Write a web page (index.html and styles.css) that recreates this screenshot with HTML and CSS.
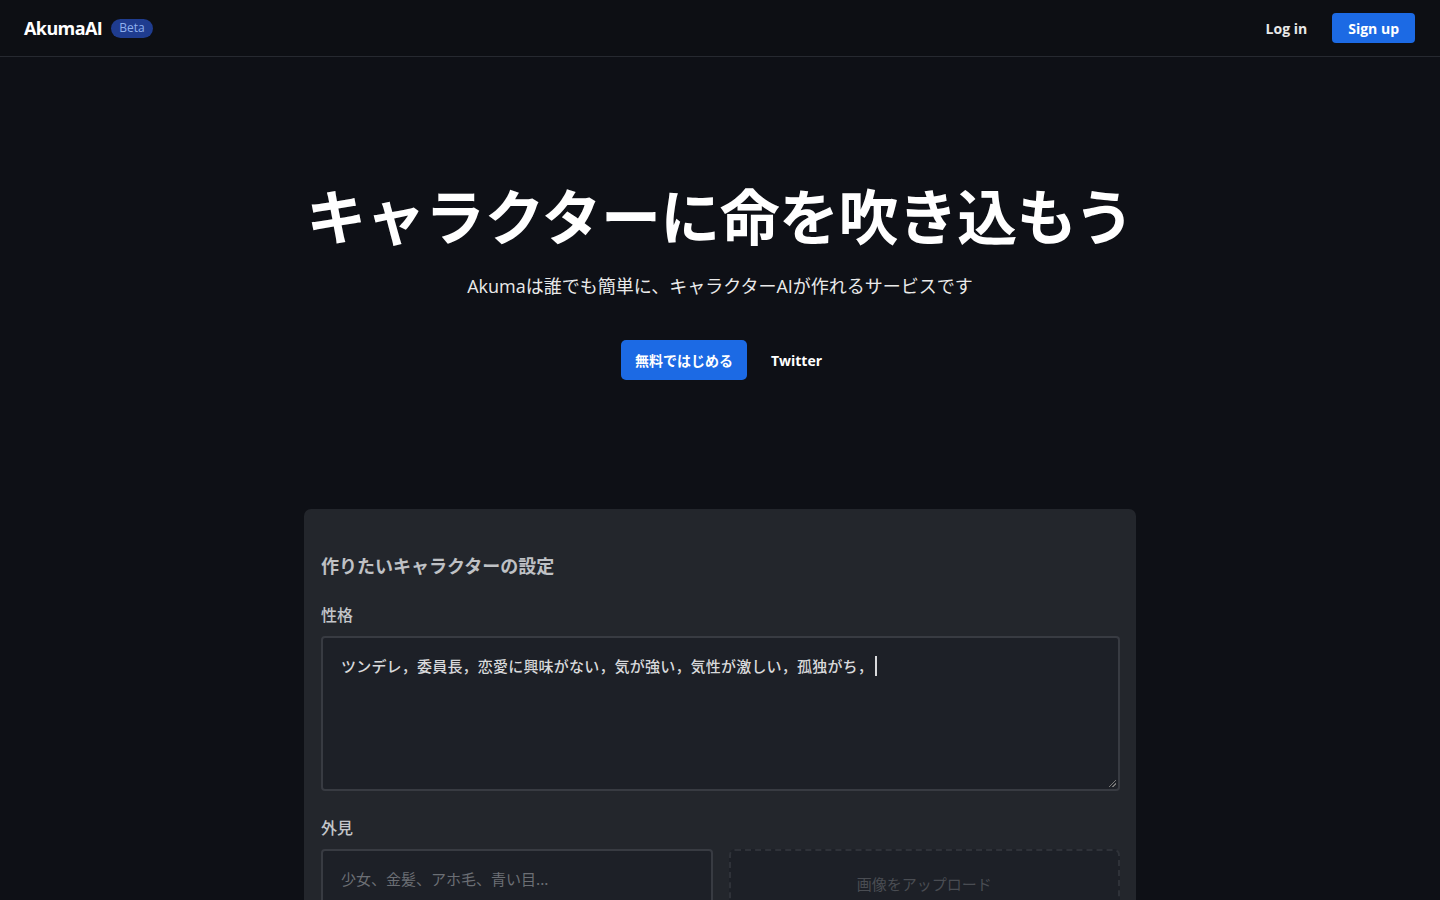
FILE: index.html
```html
<!DOCTYPE html>
<html lang="ja">
<head>
    <meta charset="UTF-8">
    <meta name="viewport" content="width=device-width, initial-scale=1.0">
    <title>AkumaAI</title>
    <link rel="stylesheet" href="styles.css">
</head>
<body>
    <header class="nav">
        <div class="brand">
            <span class="logo">AkumaAI</span>
            <span class="badge">Beta</span>
        </div>
        <div class="nav-actions">
            <a class="login" href="#">Log in</a>
            <a class="signup" href="#">Sign up</a>
        </div>
    </header>

    <section class="hero">
        <h1>キャラクターに命を吹き込もう</h1>
        <p class="lead">Akumaは誰でも簡単に、キャラクターAIが作れるサービスです</p>
        <div class="cta">
            <a class="btn-primary" href="#">無料ではじめる</a>
            <a class="btn-link" href="#">Twitter</a>
        </div>
    </section>

    <section class="card">
        <h2>作りたいキャラクターの設定</h2>
        <label class="field-label">性格</label>
        <div class="textarea">ツンデレ，委員長，恋愛に興味がない，気が強い，気性が激しい，孤独がち，<span class="caret"></span>
            <span class="grip"></span>
        </div>
        <label class="field-label">外見</label>
        <div class="row">
            <div class="input">少女、金髪、アホ毛、青い目...</div>
            <div class="dropzone"><span>画像をアップロード</span></div>
        </div>
    </section>
</body>
</html>
```

FILE: styles.css
```css
* {
    box-sizing: border-box;
}
body {
    margin: 0;
    height: 900px;
    overflow: hidden;
    background: #0e1016;
    color: #ffffff;
    font-family: "Open Sans", "Noto Sans CJK JP", sans-serif;
}
a {
    text-decoration: none;
    color: inherit;
}
.nav {
    height: 57px;
    display: flex;
    align-items: center;
    justify-content: space-between;
    padding: 0 25px 0 24px;
    border-bottom: 1px solid #262930;
    background: #0d0f14;
}
.brand {
    display: flex;
    align-items: center;
    gap: 9px;
}
.logo {
    font-size: 18px;
    font-weight: 700;
    letter-spacing: -0.6px;
}
.badge {
    font-size: 12px;
    color: #8fb0ee;
    background: #1f3c8f;
    border-radius: 10px;
    padding: 1px 8px 2px;
    line-height: 16px;
}
.nav-actions {
    display: flex;
    align-items: center;
    gap: 25px;
}
.login {
    font-size: 14px;
    font-weight: 700;
    color: #e8e8e8;
}
.signup {
    font-size: 14px;
    font-weight: 700;
    background: #1c6ae4;
    border-radius: 4px;
    height: 30px;
    padding: 0 16px;
    display: flex;
    align-items: center;
}
.hero {
    text-align: center;
    padding-top: 117px;
}
.hero h1 {
    margin: 0;
    font-family: "Noto Sans CJK JP", sans-serif;
    font-size: 60px;
    font-weight: 700;
    line-height: 80px;
    letter-spacing: -0.6px;
}
.lead {
    margin: 19px 0 0;
    font-size: 18px;
    color: #eaeaea;
    line-height: 26px;
}
.cta {
    margin-top: 41px;
    display: flex;
    justify-content: center;
    align-items: center;
    gap: 24px;
    padding-left: 3px;
}
.btn-primary {
    background: #1c6ae4;
    border-radius: 5px;
    height: 40px;
    padding: 0 14px;
    display: flex;
    align-items: center;
    font-size: 14px;
    font-weight: 700;
}
.btn-link {
    font-size: 14px;
    font-weight: 700;
}
.card {
    width: 832px;
    margin: 129px auto 0;
    background: #23262c;
    border-radius: 7px;
    padding: 41px 16px 0 17px;
    font-family: "Noto Sans CJK JP", sans-serif;
}
.card h2 {
    margin: 0;
    font-size: 18px;
    font-weight: 700;
    color: #bfc1c5;
    line-height: 30px;
}
.field-label {
    display: block;
    margin-top: 22px;
    font-size: 16px;
    font-weight: 500;
    color: #c4c6ca;
    line-height: 24px;
}
.textarea {
    position: relative;
    margin-top: 10px;
    height: 155px;
    background: #1d2027;
    border: 2px solid #383b42;
    border-radius: 4px;
    padding: 16px 18px;
    font-size: 15px;
    font-weight: 500;
    letter-spacing: 0.2px;
    color: #d8d9db;
    line-height: 24px;
}
.textarea + .field-label {
    margin-top: 24px;
}
.caret {
    display: inline-block;
    width: 2px;
    height: 20px;
    background: #d8d9db;
    vertical-align: -4px;
    margin-left: 2px;
}
.grip {
    position: absolute;
    right: 2px;
    bottom: 2px;
    width: 7px;
    height: 7px;
    background: linear-gradient(135deg, transparent 45%, #777 45%, #777 55%, transparent 55%, transparent 70%, #777 70%, #777 80%, transparent 80%);
}
.row {
    margin-top: 10px;
    display: grid;
    grid-template-columns: 1fr 1fr;
    gap: 16px;
}
.input {
    height: 90px;
    background: #1d2027;
    border: 2px solid #383b42;
    border-radius: 4px;
    padding: 16px 18px;
    font-size: 15px;
    color: #6c6f75;
    line-height: 24px;
}
.dropzone {
    height: 90px;
    background: #1d2027;
    border: 2px dashed #2f3239;
    border-radius: 6px;
    display: flex;
    justify-content: center;
    padding-top: 22px;
    font-size: 15px;
    color: #4a4d53;
}
```
